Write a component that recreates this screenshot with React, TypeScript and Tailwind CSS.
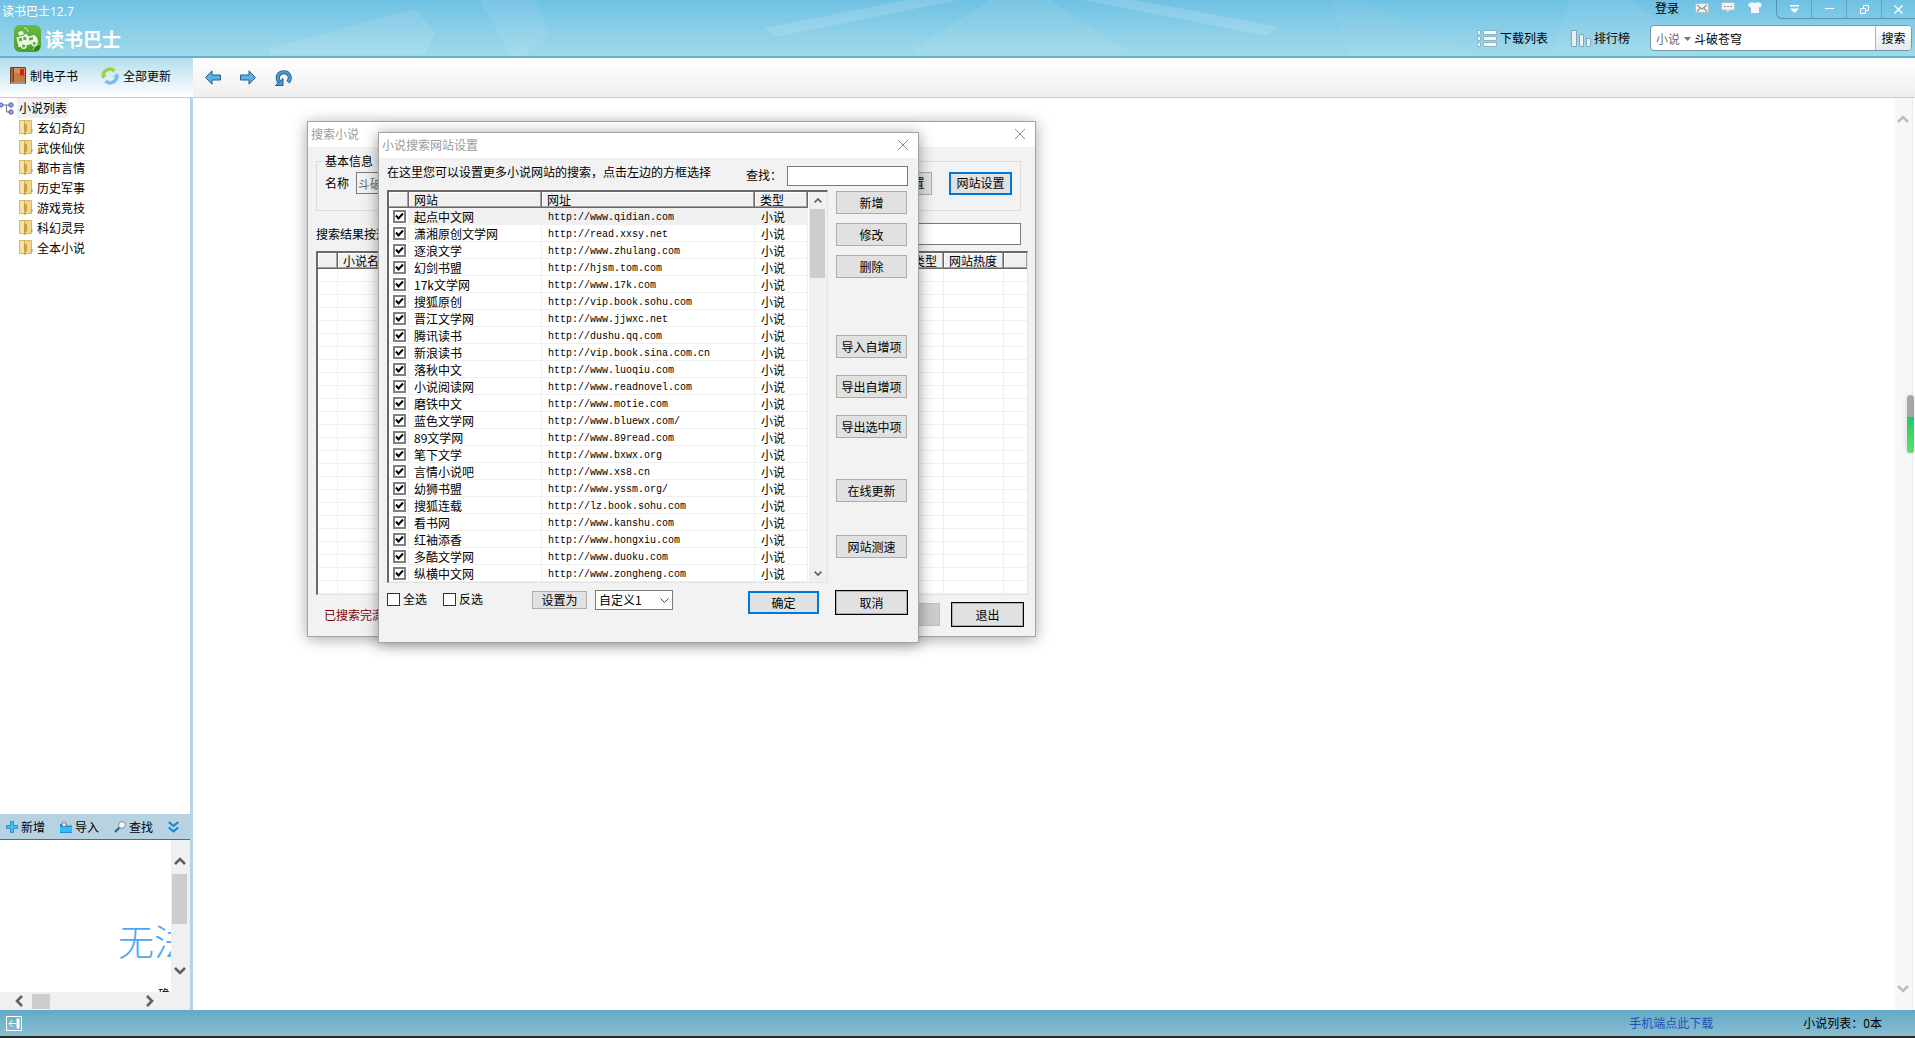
import { useState } from "react";

const categories = ["玄幻奇幻", "武侠仙侠", "都市言情", "历史军事", "游戏竞技", "科幻灵异", "全本小说"];

const sites = [
  { name: "起点中文网", url: "http://www.qidian.com" },
  { name: "潇湘原创文学网", url: "http://read.xxsy.net" },
  { name: "逐浪文学", url: "http://www.zhulang.com" },
  { name: "幻剑书盟", url: "http://hjsm.tom.com" },
  { name: "17k文学网", url: "http://www.17k.com" },
  { name: "搜狐原创", url: "http://vip.book.sohu.com" },
  { name: "晋江文学网", url: "http://www.jjwxc.net" },
  { name: "腾讯读书", url: "http://dushu.qq.com" },
  { name: "新浪读书", url: "http://vip.book.sina.com.cn" },
  { name: "落秋中文", url: "http://www.luoqiu.com" },
  { name: "小说阅读网", url: "http://www.readnovel.com" },
  { name: "磨铁中文", url: "http://www.motie.com" },
  { name: "蓝色文学网", url: "http://www.bluewx.com/" },
  { name: "89文学网", url: "http://www.89read.com" },
  { name: "笔下文学", url: "http://www.bxwx.org" },
  { name: "言情小说吧", url: "http://www.xs8.cn" },
  { name: "幼狮书盟", url: "http://www.yssm.org/" },
  { name: "搜狐连载", url: "http://lz.book.sohu.com" },
  { name: "看书网", url: "http://www.kanshu.com" },
  { name: "红袖添香", url: "http://www.hongxiu.com" },
  { name: "多酷文学网", url: "http://www.duoku.com" },
  { name: "纵横中文网", url: "http://www.zongheng.com" },
];

const sideButtons = [
  { label: "新增", gap: "mt-px" },
  { label: "修改", gap: "mt-[9px]" },
  { label: "删除", gap: "mt-[9px]" },
  { label: "导入自增项", gap: "mt-[57px]" },
  { label: "导出自增项", gap: "mt-[17px]" },
  { label: "导出选中项", gap: "mt-[17px]" },
  { label: "在线更新", gap: "mt-[41px]" },
  { label: "网站测速", gap: "mt-[33px]" },
];

const btn = "flex items-center justify-center whitespace-nowrap bg-[#e1e1e1] ";
const headCell =
  "h-4 overflow-hidden whitespace-nowrap border-b border-r border-[#696969] bg-[#f0f0f0] p-0 text-left font-normal leading-[15px] shadow-[inset_-1px_-1px_0_#a0a0a0,inset_1px_1px_0_#ffffff] ";
const cell = "border-b border-r border-[#f0f0f0] p-0 ";
const sunken = "border-b border-l-2 border-r border-t-2 border-b-[#e3e3e3] border-l-[#696969] border-r-[#e3e3e3] border-t-[#696969] bg-white ";

function Chevron({ dir, className }: { dir: "up" | "down" | "left" | "right"; className: string }) {
  const points = {
    up: "1,8 6,3 11,8",
    down: "1,4 6,9 11,4",
    left: "9,1 4,6 9,11",
    right: "4,1 9,6 4,11",
  };
  return (
    <svg viewBox="0 0 12 12" className={className} fill="none" stroke="currentColor" strokeWidth="2.6">
      <polyline points={points[dir]} />
    </svg>
  );
}

function CloseIcon() {
  return (
    <svg viewBox="0 0 10 10" className="h-[10px] w-[10px]" stroke="#8c8c8c" strokeWidth="1">
      <path d="M0 0L10 10M10 0L0 10" />
    </svg>
  );
}

function BusLogo() {
  return (
    <svg viewBox="0 0 27 27" className="h-[27px] w-[27px]">
      <defs>
        <linearGradient id="busBg" x1="0" y1="0" x2="0" y2="1">
          <stop offset="0" stopColor="#6cb944" />
          <stop offset="1" stopColor="#48a02f" />
        </linearGradient>
      </defs>
      <rect width="27" height="27" rx="6" fill="url(#busBg)" />
      <g transform="rotate(-14 13 14)" fill="#e9f6e0">
        <path d="M3 10h8v-1h3l1 3h6l2 3v5H3z" />
        <rect x="6" y="5" width="5" height="4" rx="1" />
        <circle cx="8" cy="20" r="3" />
        <circle cx="19" cy="20" r="3" />
        <path d="M5 11.500h3v3H5zM9.500 11.500h3v3h-3zM15 13.500h4v2.500h-4z" fill="#5bac3a" />
        <circle cx="8" cy="20" r="1.500" fill="#5bac3a" />
        <circle cx="19" cy="20" r="1.500" fill="#5bac3a" />
      </g>
      <path d="M10 3c2.500 0 4 2 4 4" fill="none" stroke="#a6db89" strokeWidth="1.500" />
      <path d="M20 26c0-3 2-5 6-6 0 4-2 6-6 6z" fill="#2f7d22" />
      <path d="M19 25c1-3 3-5 6-6" stroke="#a8d88c" strokeWidth="1" fill="none" />
    </svg>
  );
}

function BookIcon() {
  return (
    <svg viewBox="0 0 16 18" className="h-[18px] w-4">
      <rect x="0" y="0" width="16" height="17" rx="1" fill="#6d4026" />
      <rect x="4" y="1" width="11" height="14" fill="#c97b3f" />
      <rect x="4" y="1" width="11" height="5" fill="#d99358" />
      <rect x="1" y="1" width="2" height="14" fill="#9b6a48" />
      <path d="M1 15.500h14v1H1z" fill="#efe3d2" />
      <path d="M10 2h4v7l-2-1l-2 1z" fill="#d8201c" />
    </svg>
  );
}

function RefreshIcon() {
  return (
    <svg viewBox="0 0 18 18" className="h-[18px] w-[18px]" fill="none" strokeWidth="3.400">
      <path d="M2.300 10A6.700 6.700 0 0 1 13.500 4" stroke="#a3cf45" />
      <path d="M0 8h6L2 12z" fill="#a3cf45" />
      <path d="M15.700 8A6.700 6.700 0 0 1 4.500 14" stroke="#7dbcec" />
      <path d="M18 10h-6l4-4z" fill="#7dbcec" />
    </svg>
  );
}

function ArrowIcon({ flip }: { flip?: boolean }) {
  return (
    <svg viewBox="0 0 16 15" className="h-[15px] w-4">
      <path
        d={flip ? "M15.500 7.500L9 .8V5H.5v5H9v4.200z" : "M.5 7.500L7 .8V5h8.500v5H7v4.200z"}
        fill="#5cb1e0"
        stroke="#235f8c"
        strokeWidth="1"
      />
    </svg>
  );
}

function UndoIcon() {
  return (
    <svg viewBox="0 0 17 16" className="h-4 w-[17px]" fill="none">
      <path d="M4.500 12C.5 7 4 2.200 8.800 2.200c5 0 8 5.300 4.200 10" stroke="#235f8c" strokeWidth="4" />
      <path d="M4.500 12C.5 7 4 2.200 8.800 2.200c5 0 8 5.300 4.200 10" stroke="#4d9ccb" strokeWidth="2.200" />
      <path d="M.5 15.500h7.500V8.500z" fill="#4d9ccb" stroke="#235f8c" />
    </svg>
  );
}

function TreeIcon() {
  return (
    <svg viewBox="0 0 14 13" className="h-[13px] w-[14px]">
      <path d="M2 3h9M6.500 3v7H11" stroke="#777" fill="none" />
      <g fill="#8ea4f2" stroke="#4a5fc4">
        <circle cx="1" cy="3" r="2" />
        <circle cx="11" cy="3" r="2.200" />
        <circle cx="11" cy="10" r="2.200" />
      </g>
    </svg>
  );
}

function FolderIcon() {
  return (
    <svg viewBox="0 0 14 16" className="h-4 w-[14px]">
      <path d="M5 .5h7.500v13H5z" fill="#f0d68a" stroke="#cfa94e" strokeWidth=".8" />
      <rect x="12" y="9" width="1.500" height="3" fill="#4ab8e8" />
      <path d="M.5.5h5v14L4 13.500H.5z" fill="#f6e3a4" stroke="#cda850" strokeWidth=".8" />
      <path d="M5 3l3 1.500V11l-1.500 1v3.500L5 14z" fill="#c99f45" />
    </svg>
  );
}

function HeaderRays() {
  return (
    <svg viewBox="0 0 1915 58" preserveAspectRatio="none" className="absolute inset-0 h-full w-full" fill="#ffffff">
      <path d="M270 50L415 9L435 34L425 56H270z" fillOpacity=".1" />
      <path d="M480 0h55l14 34l-26 24h-12z" fillOpacity=".08" />
      <path d="M764 29L907 0h52L776 38z" fillOpacity=".14" />
      <path d="M1083 0h52L1280 28L1266 37z" fillOpacity=".15" />
      <path d="M915 50L990 0h60L1130 55H915z" fillOpacity=".07" />
      <path d="M1550 56L1570 0h60L1700 56z" fillOpacity=".06" />
      <path d="M1330 0h30L1480 58H1350z" fillOpacity=".04" />
    </svg>
  );
}

function Header() {
  return (
    <header className="relative flex h-[58px] shrink-0 justify-between border-b-2 border-[#62b2d2] bg-linear-to-b from-[#6fc1e4] to-[#a0daea]">
      <HeaderRays />
      <div className="relative flex flex-col pl-[2px]">
        <h1 className="mt-[3px] h-[18px] font-['Open_Sans','Noto_Sans_CJK_SC',sans-serif] leading-[18px] text-white">读书巴士12.7</h1>
        <div className="ml-3 mt-1 flex items-center gap-1">
          <BusLogo />
          <span className="text-[19px] font-bold leading-[24px] text-white">读书巴士</span>
        </div>
      </div>
      <div className="relative flex flex-col">
        <div className="flex items-start justify-end">
          <a href="#" className="mr-4 leading-4">登录</a>
          <button aria-label="消息" className="mr-3 mt-[3px]">
            <svg viewBox="0 0 14 10" className="h-[10px] w-[14px]">
              <rect x=".5" y=".5" width="13" height="9" fill="#f2f5f6" stroke="#b5bfc3" />
              <path d="M2 2l5 4l5-4M2 8.500l3-3M12 8.500l-3-3" stroke="#8f8f8f" fill="none" strokeWidth="1.200" />
            </svg>
          </button>
          <button aria-label="反馈" className="mr-[13px] mt-[2px]">
            <svg viewBox="0 0 14 12" className="h-3 w-[14px]">
              <path d="M2 .5h10q1.500 0 1.500 1.500v4.500q0 1.500-1.500 1.500H8.500L6 11V8H2Q.5 8 .5 6.500V2Q.5.5 2 .5z" fill="#f4f4f4" stroke="#a9b8be" strokeWidth=".6" />
              <path d="M3 4.500h2M6 4.500h2M9 4.500h2" stroke="#999" />
            </svg>
          </button>
          <button aria-label="换肤" className="mr-[14px] mt-[2px]">
            <svg viewBox="0 0 14 11" className="h-[11px] w-[14px]">
              <path d="M4 0q3 2 6 0l4 2l-1.500 3.500L11 5v6H3V5l-1.500.5L0 2z" fill="#f7f7f7" />
            </svg>
          </button>
          <div className="flex h-[19px] divide-x divide-[#64a5c4] rounded-bl-md border-b border-l border-[#5a93b0]">
            <button aria-label="菜单" className="flex w-[35px] items-center justify-center">
              <svg viewBox="0 0 9 8" className="h-2 w-[9px]" fill="#fff">
                <path d="M0 0h9v1.500H0zM0 3.500h9L4.500 8z" />
              </svg>
            </button>
            <button aria-label="最小化" className="flex w-[35px] items-center justify-center">
              <svg viewBox="0 0 9 2" className="h-[2px] w-[9px]"><path d="M0 .5h9" stroke="#fff" /></svg>
            </button>
            <button aria-label="还原" className="flex w-[35px] items-center justify-center">
              <svg viewBox="0 0 9 9" className="h-[9px] w-[9px]" fill="none" stroke="#fff">
                <path d="M.5 3.500h5v5h-5zM3.500 3.500v-3h5v5h-3" />
              </svg>
            </button>
            <button aria-label="关闭" className="flex w-[33px] items-center justify-center">
              <svg viewBox="0 0 9 9" className="h-[9px] w-[9px]" stroke="#fff" strokeWidth="1.400">
                <path d="M.5.5l8 8M8.500.5l-8 8" />
              </svg>
            </button>
          </div>
        </div>
        <div className="mt-[6px] flex h-[26px] items-center pr-[3px]">
          <button className="mr-[23px] flex items-center gap-[3px]">
            <svg viewBox="0 0 20 17" className="h-[17px] w-5" fill="#f2f9fb" stroke="#8fb5c4">
              <path d="M.5.5h3v4h-3zM.5 6.500h3v4h-3zM.5 12.500h3v4h-3zM6.500.5h13v4h-13zM6.500 6.500h13v4h-13zM6.500 12.500h13v4h-13z" />
            </svg>
            下载列表
          </button>
          <button className="mr-5 flex items-center gap-[3px]">
            <svg viewBox="0 0 20 17" className="h-[17px] w-5" fill="#e6f1f4" stroke="#7fa9ba">
              <path d="M.5.5h5v16h-5zM8.500 4.500h4v12h-4zM15.500 8.500h4v8h-4z" />
            </svg>
            排行榜
          </button>
          <div className="flex h-[26px] w-[262px] overflow-hidden rounded border border-[#7499ab] bg-white">
            <button className="flex items-center gap-1 pl-[5px] pt-[2px] text-[#6a6a6a]">
              小说
              <svg viewBox="0 0 7 4" className="h-1 w-[7px]"><path d="M0 0h7L3.500 4z" fill="#777" /></svg>
            </button>
            <input aria-label="搜索小说" defaultValue="斗破苍穹" className="min-w-0 flex-1 px-[3px] pt-[2px] outline-none" />
            <button className="w-9 border-l border-[#a5b9c3] bg-linear-to-b from-white to-[#e6eaee]">搜索</button>
          </div>
        </div>
      </div>
    </header>
  );
}

function Toolbar() {
  return (
    <div className="flex h-10 shrink-0 border-b border-[#b7cfdc]">
      <div className="flex w-[193px] items-center bg-linear-to-b from-[#b3deee] to-white pb-[3px] pl-[10px]">
        <button className="flex items-center gap-1">
          <BookIcon />
          制电子书
        </button>
        <button className="ml-[23px] flex items-center gap-1">
          <RefreshIcon />
          全部更新
        </button>
      </div>
      <nav className="flex flex-1 items-center gap-[19px] bg-linear-to-b from-white to-[#efefef] pl-3">
        <button aria-label="后退"><ArrowIcon /></button>
        <button aria-label="前进"><ArrowIcon flip /></button>
        <button aria-label="刷新"><UndoIcon /></button>
      </nav>
    </div>
  );
}

function Sidebar() {
  return (
    <aside className="flex w-[193px] shrink-0 flex-col border-r-[3px] border-[#b7d2e0]">
      <div className="flex-1">
        <div className="flex h-5 items-center gap-[3px]">
          <TreeIcon />
          <span className="bg-[#f0f0f0] px-[2px] leading-5">小说列表</span>
        </div>
        <ul>
          {categories.map((c) => (
            <li key={c} className="flex h-5 items-center gap-1 pl-[19px]">
              <FolderIcon />
              {c}
            </li>
          ))}
        </ul>
      </div>
      <div className="flex h-[26px] items-center border-b border-[#666] bg-[#b7d2e0] pl-[6px]">
        <button className="flex items-center gap-[3px]">
          <svg viewBox="0 0 12 12" className="h-3 w-3">
            <path d="M4.500.5h3v4h4v3h-4v4h-3v-4h-4v-3h4z" fill="#45bdf2" stroke="#1f83c0" strokeWidth=".8" />
          </svg>
          新增
        </button>
        <button className="ml-[15px] flex items-center gap-[3px]">
          <svg viewBox="0 0 12 12" className="h-3 w-3">
            <path d="M0 3h5l1 1.500h6V12H0z" fill="#1f8fd2" />
            <path d="M0 6h12v5H0z" fill="#2ec0fb" />
            <path d="M3 0h2v3h2L4 6L1 3h2z" fill="#fff" stroke="#555" strokeWidth=".6" />
          </svg>
          导入
        </button>
        <button className="ml-[15px] flex items-center gap-[3px]">
          <svg viewBox="0 0 12 12" className="h-3 w-3">
            <path d="M1 11l4.500-4.500" stroke="#1e7895" strokeWidth="2.400" />
            <circle cx="8" cy="4" r="3.400" fill="#f0fafd" stroke="#7a8f98" />
          </svg>
          查找
        </button>
        <button aria-label="更多" className="ml-[15px]">
          <svg viewBox="0 0 11 12" className="h-3 w-[11px]" fill="none" stroke="#1585cf" strokeWidth="2">
            <path d="M.8 1l4.700 4l4.700-4M.8 6.500l4.700 4l4.700-4" />
          </svg>
        </button>
      </div>
      <div className="flex h-[152px] bg-[#f0f0f0] pr-[2px]">
        <div className="min-w-0 flex-1 overflow-hidden whitespace-nowrap bg-white">
          <p className="mt-[76px] pl-[118px] text-[36px] font-light leading-[48px] text-[#4aa8f8]">无法</p>
          <p className="mt-[22px] pl-[158px] leading-[16px]">确</p>
        </div>
        <div className="flex w-[17px] flex-col items-center bg-[#f0f0f0] py-4 text-[#606060]">
          <Chevron dir="up" className="h-3 w-3" />
          <div className="mt-[6px] h-[50px] w-[15px] bg-[#cdcdcd]" />
          <Chevron dir="down" className="mt-auto h-3 w-3" />
        </div>
      </div>
      <div className="flex h-[18px] items-center bg-[#f0f0f0] pl-[13px] pr-[35px] text-[#606060]">
        <Chevron dir="left" className="h-3 w-3" />
        <div className="ml-[7px] h-[15px] w-[18px] bg-[#cdcdcd]" />
        <Chevron dir="right" className="ml-auto h-3 w-3" />
      </div>
    </aside>
  );
}

function SearchWindow() {
  return (
    <section className="absolute left-[307px] top-[121px] flex w-[729px] flex-col border border-[#a3a3a3] bg-[#f2f2f2] pb-[9px] shadow-[0_2px_14px_rgba(0,0,0,0.35)]">
      <div className="flex h-[25px] items-center justify-between bg-white pb-[2px] pl-[3px] pr-[10px] text-[#9a9a9a]">
        <h2>搜索小说</h2>
        <button aria-label="关闭搜索小说"><CloseIcon /></button>
      </div>
      <div className="pl-2 pr-[7px] pt-1">
        <fieldset className="mr-[7px] h-[60px] border border-[#dcdcdc] px-2">
          <legend className="-ml-[2px] px-[2px] leading-5">基本信息</legend>
          <div className="flex h-6 items-center">
            <label htmlFor="bookName">名称</label>
            <input id="bookName" readOnly value="斗破苍穹" className="ml-[7px] h-[22px] w-[300px] border border-[#7a7a7a] px-px text-[#6d6d6d]" />
            <button disabled className={btn + "ml-auto h-[23px] w-[63px] border border-[#adadad]"}>搜索设置</button>
            <button className={btn + "ml-[17px] h-[23px] w-[63px] border-2 border-[#0078d7]"}>网站设置</button>
          </div>
        </fieldset>
        <div className="mr-[7px] mt-3 flex h-[22px] items-center">
          <label htmlFor="filterText">搜索结果按选择</label>
          <input id="filterText" className="ml-auto h-[22px] w-[400px] border border-[#7a7a7a] bg-white px-1" />
        </div>
        <div className={sunken + "mt-[6px]"}>
          <table className="w-full table-fixed border-separate border-spacing-0">
            <colgroup>
              <col className="w-5" />
              <col />
              <col className="w-9" />
              <col className="w-[60px]" />
              <col className="w-[23px]" />
            </colgroup>
            <thead>
              <tr>
                <th className={headCell} />
                <th className={headCell + "pl-[5px]"}>小说名称</th>
                <th className={headCell + "pl-[5px]"}>类型</th>
                <th className={headCell + "pl-[5px]"}>网站热度</th>
                <th className={headCell + "border-r-0"} />
              </tr>
            </thead>
            <tbody>
              {Array.from({ length: 25 }, (_, i) => (
                <tr key={i}>
                  <td className={cell + "h-[13px]"} />
                  <td className={cell} />
                  <td className={cell} />
                  <td className={cell} />
                  <td className="border-b border-[#f0f0f0] p-0" />
                </tr>
              ))}
            </tbody>
          </table>
        </div>
        <div className="mr-1 mt-[7px] flex items-center">
          <p className="pl-2 text-[#800000]">已搜索完潇湘原创</p>
          <button disabled aria-label="下载" className="ml-auto h-[23px] w-[71px] border border-[#bfbfbf] bg-[#cccccc]" />
          <button className={btn + "ml-[11px] h-[25px] w-[73px] border border-black shadow-[inset_0_0_0_1px_#adadad]"}>退出</button>
        </div>
      </div>
    </section>
  );
}

function SiteRow({ site, active }: { site: { name: string; url: string }; active: boolean }) {
  const [checked, setChecked] = useState(true);
  return (
    <tr className={active ? "bg-[#f0f0f0]" : ""}>
      <td className={cell + "h-[17px] bg-white pl-1"}>
        <span className="grid h-[13px] w-[13px]">
          <input
            type="checkbox"
            aria-label={site.name}
            checked={checked}
            onChange={() => setChecked(!checked)}
            className="col-start-1 row-start-1 h-[13px] w-[13px] appearance-none border-2 border-[#808080] bg-white"
          />
          {checked && (
            <svg viewBox="0 0 13 13" className="pointer-events-none col-start-1 row-start-1 h-[13px] w-[13px]" fill="none" stroke="#000" strokeWidth="2">
              <path d="M3 5.500l2.500 3l4.500-5" />
            </svg>
          )}
        </span>
      </td>
      <td className={cell + "whitespace-nowrap pl-[5px] pt-[2px] leading-[14px]"}>{site.name}</td>
      <td className={cell + "whitespace-nowrap pl-[6px] pt-1 font-['Liberation_Mono',monospace] text-[10px] leading-3"}>{site.url}</td>
      <td className={cell + "pl-[6px] pt-[2px] leading-[14px]"}>小说</td>
    </tr>
  );
}

function SiteSettingsWindow() {
  return (
    <section className="absolute left-[378px] top-[132px] flex w-[541px] flex-col border border-[#a3a3a3] bg-[#f2f2f2] pb-[27px] shadow-[0_2px_14px_rgba(0,0,0,0.4)]">
      <div className="flex h-[25px] items-center justify-between bg-white pb-[2px] pl-[3px] pr-[10px] text-[#9a9a9a]">
        <h2>小说搜索网站设置</h2>
        <button aria-label="关闭网站设置"><CloseIcon /></button>
      </div>
      <div className="pl-2 pr-[10px] pt-2">
        <div className="flex h-5 items-start">
          <p className="leading-3">在这里您可以设置更多小说网站的搜索，点击左边的方框选择</p>
          <label htmlFor="findSite" className="ml-auto leading-[18px]">查找：</label>
          <input id="findSite" className="ml-[5px] h-5 w-[121px] border border-[#7a7a7a] bg-white px-1" />
        </div>
        <div className="mt-1 flex items-start">
          <div className={sunken + "flex flex-1"}>
            <table className="w-[419px] table-fixed border-separate border-spacing-0">
              <colgroup>
                <col className="w-[20px]" />
                <col className="w-[133px]" />
                <col className="w-[213px]" />
                <col className="w-[53px]" />
              </colgroup>
              <thead>
                <tr>
                  <th className={headCell} />
                  <th className={headCell + "pl-[5px]"}>网站</th>
                  <th className={headCell + "pl-[5px]"}>网址</th>
                  <th className={headCell + "pl-[5px]"}>类型</th>
                </tr>
              </thead>
              <tbody>
                {sites.map((s, i) => (
                  <SiteRow key={s.url} site={s} active={i === 0} />
                ))}
              </tbody>
            </table>
            <div className="ml-px flex flex-1 flex-col items-center bg-[#f0f0f0] pb-[5px] pr-px pt-[5px] text-[#606060]">
              <Chevron dir="up" className="h-2 w-2" />
              <div className="mt-1 h-[69px] w-[15px] bg-[#cdcdcd]" />
              <Chevron dir="down" className="mt-auto h-2 w-2" />
            </div>
          </div>
          <div className="ml-2 mr-px w-[71px]">
            {sideButtons.map((b) => (
              <button key={b.label} className={btn + "h-[23px] w-full border border-[#adadad] " + b.gap}>
                {b.label}
              </button>
            ))}
          </div>
        </div>
        <div className="mt-[7px] flex items-start">
          <div className="flex h-5 items-center">
            <label className="flex w-14 items-center gap-[3px] pb-[2px]">
              <input type="checkbox" className="h-[13px] w-[13px] appearance-none border border-[#333] bg-white" />
              全选
            </label>
            <label className="flex items-center gap-[3px] pb-[2px]">
              <input type="checkbox" className="h-[13px] w-[13px] appearance-none border border-[#333] bg-white" />
              反选
            </label>
            <button className={btn + "ml-[49px] h-[18px] w-[55px] border border-[#adadad]"}>设置为</button>
            <div className="relative ml-2">
              <select aria-label="自定义方案" className="h-5 w-[78px] appearance-none border border-[#7a7a7a] bg-white pl-[3px] leading-[18px]">
                <option>自定义1</option>
              </select>
              <svg viewBox="0 0 9 6" className="pointer-events-none absolute right-1 top-2 h-[6px] w-[9px]" fill="none" stroke="#444">
                <path d="M.5.500l4 4l4-4" />
              </svg>
            </div>
          </div>
          <div className="ml-auto flex items-center gap-4">
            <button className={btn + "h-[23px] w-[71px] border-2 border-[#0078d7]"}>确定</button>
            <button className={btn + "h-[25px] w-[73px] border border-black shadow-[inset_0_0_0_1px_#adadad]"}>取消</button>
          </div>
        </div>
      </div>
    </section>
  );
}

export default function App() {
  return (
    <div className="relative flex h-screen flex-col overflow-hidden bg-white font-['Noto_Sans_CJK_SC',sans-serif] text-[12px] leading-4 text-black">
      <Header />
      <Toolbar />
      <div className="flex min-h-0 flex-1">
        <Sidebar />
        <main className="flex flex-1 justify-end">
          <div className="relative mr-[2px] flex w-[18px] flex-col items-center justify-between border-r border-[#ececec] bg-[#f8f8f8] py-4 pr-px text-[#bdbdbd]">
            <Chevron dir="up" className="h-3 w-3" />
            <Chevron dir="down" className="h-3 w-3" />
            <div className="absolute -right-[2px] top-[297px] h-[58px] w-[7px] overflow-hidden rounded-full bg-[#a6a6a6] shadow-[0_0_6px_rgba(0,0,0,0.15)]">
              <div className="mt-[22px] h-9 bg-linear-to-b from-[#1fc76a] to-[#5fe06a]" />
            </div>
          </div>
        </main>
      </div>
      <footer className="flex h-7 shrink-0 items-center border-b-2 border-[#2a2a2c] bg-linear-to-b from-[#62aac6] to-[#8abdd0] pl-[6px] pr-[33px]">
        <button aria-label="收起侧栏">
          <svg viewBox="0 0 16 15" className="h-[15px] w-4">
            <rect x=".5" y=".5" width="15" height="14" fill="none" stroke="#fff" />
            <path d="M10.500 2.500h3v10h-3z" fill="#fff" />
            <path d="M3 7.500h7M6.500 4l-3.500 3.500l3.500 3.500" fill="none" stroke="#fff" />
          </svg>
        </button>
        <a href="#" className="ml-auto text-[#1b54b8]">手机端点此下载</a>
        <p className="ml-[90px]">小说列表：0本</p>
      </footer>
      <SearchWindow />
      <SiteSettingsWindow />
    </div>
  );
}
